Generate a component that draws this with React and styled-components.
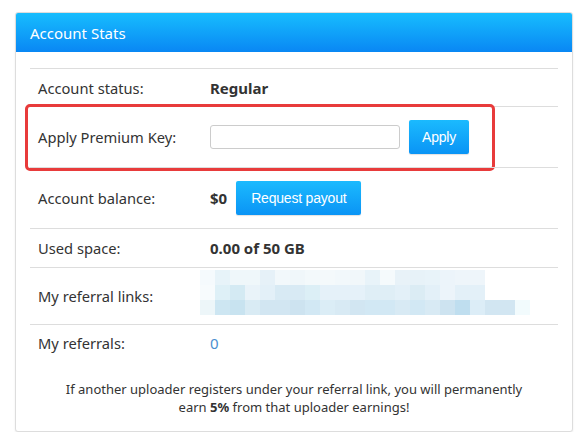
import React from "react";
import styled, {createGlobalStyle} from "styled-components";

const Global = createGlobalStyle`
    body {
        margin: 0;
        background: #fff;
        font-family: "Noto Sans", "Open Sans", sans-serif;
        color: #333;
    }
`
const Page = styled.div`
    padding: 12px 13px 0 15px;
`
const Panel = styled.div`
    width: 556px;
    border: 1px solid #ddd;
    border-radius: 3px;
    box-shadow: 0 1px 2px rgba(0,0,0,0.08);
    background: #fff;
`
const Heading = styled.div`
    height: 39px;
    padding: 0 14px;
    display: flex;
    align-items: center;
    background: linear-gradient(to bottom, #17bdfe, #0987f4);
    color: #fff;
    font-size: 15px;
    border-radius: 2px 2px 0 0;
`
const Body = styled.div`
    padding: 16px 14px 15px 14px;
`
const Row = styled.div`
    position: relative;
    display: grid;
    grid-template-columns: 180px 1fr;
    align-items: center;
    height: ${p => p.h}px;
    border-top: 1px solid #ddd;
    box-sizing: border-box;
`
const Label = styled.div`
    padding-left: 8px;
    font-size: 14.7px;
`
const Value = styled.div`
    display: flex;
    align-items: center;
    gap: ${p => p.gap || 0}px;
    font-size: 15px;
    font-weight: ${p => p.bold ? 700 : 400};
    color: ${p => p.link ? "#4b8fcf" : "#333"};
`
const Input = styled.input`
    width: 190px;
    height: 24px;
    box-sizing: border-box;
    border: 1px solid #ccc;
    border-radius: 3px;
    outline: none;
`
const Button = styled.button`
    height: 34px;
    padding: 0 ${p => p.pad}px;
    border: none;
    border-radius: 2px;
    background: linear-gradient(to bottom, #1bbafe, #0a94f5);
    color: #fff;
    font-family: "Liberation Sans", Arial, sans-serif;
    font-size: 14px;
    letter-spacing: -0.2px;
    box-shadow: 0 1px 1px rgba(0,0,0,0.12);
`
const Highlight = styled.div`
    position: absolute;
    left: -5px;
    top: -3px;
    width: 470px;
    height: 67px;
    box-sizing: border-box;
    border: 3px solid #e83b3b;
    border-radius: 5px;
    pointer-events: none;
`
const Blur = styled.svg`
    display: block;
    margin: -8px 0 0 -10px;
`
const Note = styled.div`
    margin-top: 20px;
    text-align: center;
    font-size: 13px;
    line-height: 18px;
    b { font-weight: 700; }
`

const blur = [
    ["#f5fafd","#e7f3f9","#eff7fa","#eff7fa","#e6f1f8","#f2f8fb","#f0f7fa","#f3f9fb","#f4f9fb","#f2f8fb","#f1f7fa","#e8f3f9","#f5fafc","#e8f2f8","#e7f2f8","#e8f3f9","#ecf4fa","#eef5fa","#eef5fa"],
    ["#f7fbfd","#def0f7","#d4eaf3","#e9f3f9","#e3f0f8","#d8eaf4","#d8eaf4","#dceff6","#e5f1f9","#e5f1f9","#e5f1f9","#dfeef6","#dfeef6","#e3f0f8","#dbecf4","#e3f0f8","#ecf4fa","#e3f0f8","#e3f0f8"],
    ["#edf6f9","#cde6f2","#c8e3f0","#d9ebf4","#d2e6f2","#d2e6f2","#cde3f0","#d2e8f4","#dbedf6","#d8eaf4","#d2e6f2","#d2e8f4","#d2e8f4","#d8eaf4","#d2e8f4","#d8eaf4","#cde3f0","#bfdeef","#dcedf7","#d2e6f2","#d2e6f2","#f2fbfd"],
];

const BlurredLinks = () => (
    <Blur width="330" height="45">
        {blur.map((row, r) => row.map((c, i) => (
            <rect key={r + "-" + i} x={i * 15} y={r * 15} width="15" height="15" fill={c}/>
        )))}
    </Blur>
);

const App = () => {
    return (
        <Page>
            <Global/>
            <Panel>
                <Heading>Account Stats</Heading>
                <Body>
                    <Row h={38}>
                        <Label>Account status:</Label>
                        <Value bold>Regular</Value>
                    </Row>
                    <Row h={61}>
                        <Label>Apply Premium Key:</Label>
                        <Value gap={9}>
                            <Input type="text"/>
                            <Button pad={13}>Apply</Button>
                        </Value>
                        <Highlight/>
                    </Row>
                    <Row h={61}>
                        <Label>Account balance:</Label>
                        <Value bold gap={9}>
                            $0
                            <Button pad={15}>Request payout</Button>
                        </Value>
                    </Row>
                    <Row h={39}>
                        <Label>Used space:</Label>
                        <Value bold>0.00 of 50 GB</Value>
                    </Row>
                    <Row h={57}>
                        <Label>My referral links:</Label>
                        <Value><BlurredLinks/></Value>
                    </Row>
                    <Row h={36}>
                        <Label>My referrals:</Label>
                        <Value link>0</Value>
                    </Row>
                    <Note>
                        If another uploader registers under your referral link, you will permanently<br/>
                        earn <b>5%</b> from that uploader earnings!
                    </Note>
                </Body>
            </Panel>
        </Page>
    );
}
export default App;
